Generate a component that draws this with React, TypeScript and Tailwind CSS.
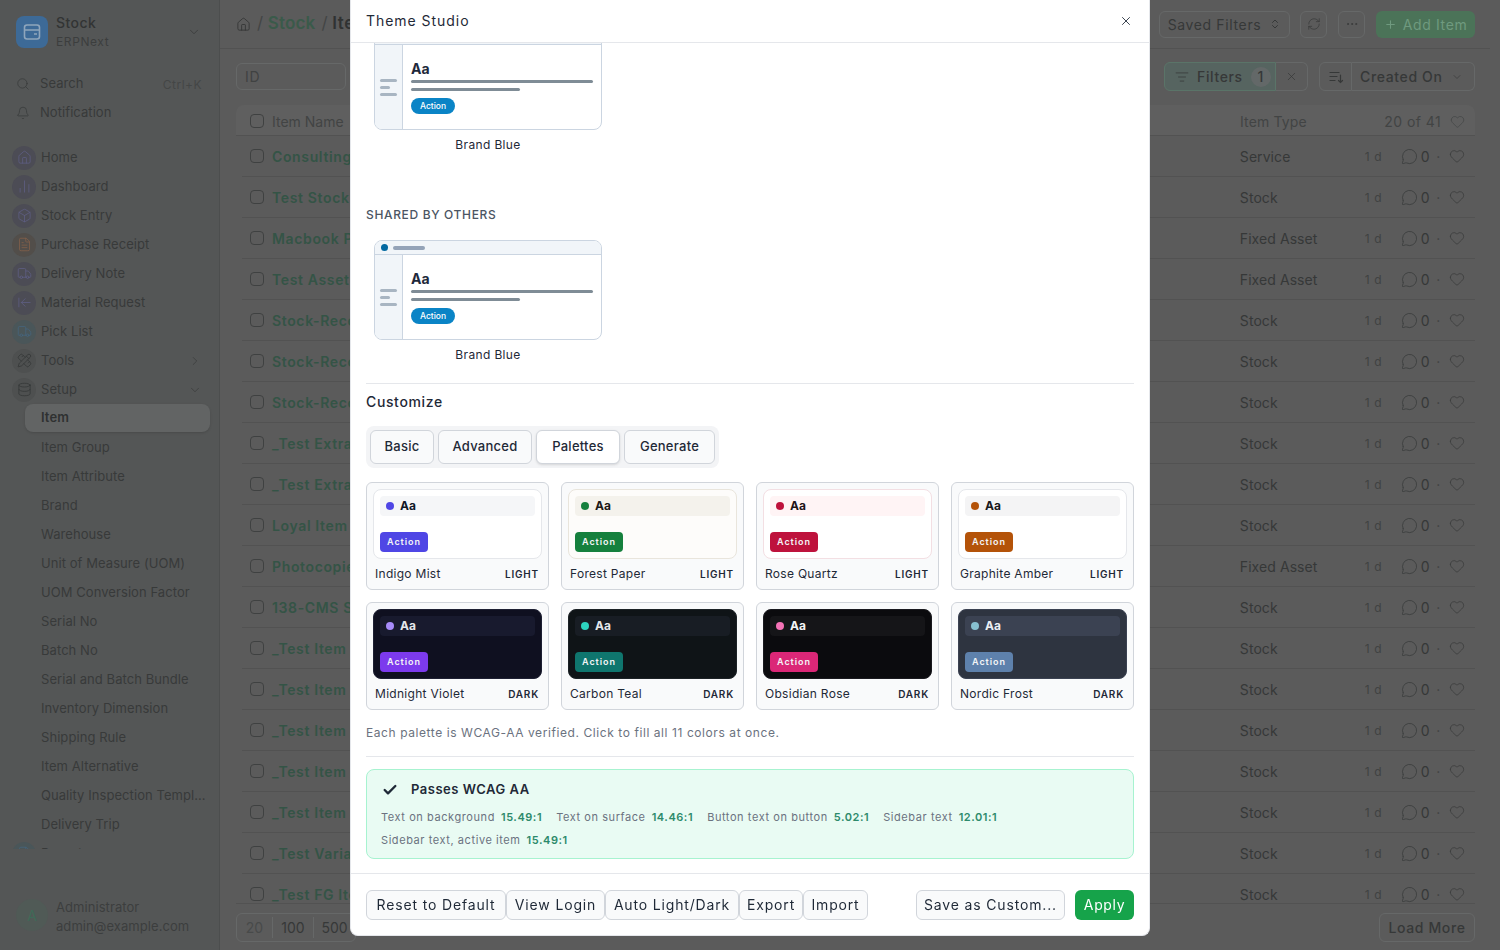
import {
  ArrowLeftToLine, Bell, Box, ChartNoAxesColumn, Check, ChevronDown, ChevronRight,
  ChevronsUpDown, Database, Ellipsis, FileText, Heart, Home, ListFilter, MessageCircle, PencilRuler,
  Plus, RefreshCw, Search, Truck, X,
} from "lucide-react";

const menu = [
  { label: "Home", icon: Home, bg: "bg-[#4c4c55]", fg: "text-[#5f5f85]" },
  { label: "Dashboard", icon: ChartNoAxesColumn, bg: "bg-[#4c4c55]", fg: "text-[#5f5f85]" },
  { label: "Stock Entry", icon: Box, bg: "bg-[#4c4c55]", fg: "text-[#5f5f85]" },
  { label: "Purchase Receipt", icon: FileText, bg: "bg-[#524e4a]", fg: "text-[#85604a]" },
  { label: "Delivery Note", icon: Truck, bg: "bg-[#4c4c55]", fg: "text-[#5f5f85]" },
  { label: "Material Request", icon: ArrowLeftToLine, bg: "bg-[#4c4c55]", fg: "text-[#5f5f85]" },
  { label: "Pick List", icon: Truck, bg: "bg-[#4a5659]", fg: "text-[#45667f]" },
  { label: "Tools", icon: PencilRuler, bg: "bg-[#4e5050]", fg: "text-[#333535]", arrow: "right" },
  { label: "Setup", icon: Database, bg: "bg-[#4e5050]", fg: "text-[#333535]", arrow: "down" },
];

const setupItems = [
  "Item Group", "Item Attribute", "Brand", "Warehouse", "Unit of Measure (UOM)", "UOM Conversion Factor",
  "Serial No", "Batch No", "Serial and Batch Bundle", "Inventory Dimension", "Shipping Rule",
  "Item Alternative", "Quality Inspection Template", "Delivery Trip",
];

const rows = [
  ["Consulting Services", "Service"], ["Test Stock Item", "Stock"], ["Macbook Pro 16", "Fixed Asset"],
  ["Test Asset Item", "Fixed Asset"], ["Stock-Reco-Item-1", "Stock"], ["Stock-Reco-Item-2", "Stock"],
  ["Stock-Reco-Item-3", "Stock"], ["_Test Extra Item 1", "Stock"], ["_Test Extra Item 2", "Stock"],
  ["Loyal Item", "Stock"], ["Photocopier Unit", "Fixed Asset"], ["138-CMS Shoe", "Stock"],
  ["_Test Item Group", "Stock"], ["_Test Item Home", "Stock"], ["_Test Item Desktop", "Stock"],
  ["_Test Item With", "Stock"], ["_Test Item Wise", "Stock"], ["_Test Variant Item", "Stock"],
  ["_Test FG Item", "Stock"],
];

const tabs = [
  { label: "Basic", w: "w-[64px]" },
  { label: "Advanced", w: "w-[94px]" },
  { label: "Palettes", w: "w-[84px]" },
  { label: "Generate", w: "w-[91px]" },
];

const footerLeft = [
  { label: "Reset to Default", w: "w-[140px]" },
  { label: "View Login", w: "w-[99px]" },
  { label: "Auto Light/Dark", w: "w-[134px]" },
  { label: "Export", w: "w-[64px]" },
  { label: "Import", w: "w-[65px]" },
];

const palettes = [
  { name: "Indigo Mist", mode: "LIGHT", card: "bg-white border-[#e5e7eb]", strip: "bg-[#f5f6f8]", dot: "bg-[#4f46e5]", aa: "text-[#111827]", btn: "bg-[#4f46e5]" },
  { name: "Forest Paper", mode: "LIGHT", card: "bg-[#fdfcfa] border-[#e9e5dc]", strip: "bg-[#f4f2ec]", dot: "bg-[#15803d]", aa: "text-[#1c1917]", btn: "bg-[#15803d]" },
  { name: "Rose Quartz", mode: "LIGHT", card: "bg-white border-[#f3dfe3]", strip: "bg-[#fff4f5]", dot: "bg-[#be123c]", aa: "text-[#1f1418]", btn: "bg-[#be123c]" },
  { name: "Graphite Amber", mode: "LIGHT", card: "bg-white border-[#e5e7eb]", strip: "bg-[#f4f4f5]", dot: "bg-[#b45309]", aa: "text-[#18181b]", btn: "bg-[#b45309]" },
  { name: "Midnight Violet", mode: "DARK", card: "bg-[#0f1020] border-[#1e2033]", strip: "bg-[#181a2e]", dot: "bg-[#a78bfa]", aa: "text-[#e5e7eb]", btn: "bg-[#7c3aed]" },
  { name: "Carbon Teal", mode: "DARK", card: "bg-[#0f1417] border-[#1c2226]", strip: "bg-[#181d24]", dot: "bg-[#2dd4bf]", aa: "text-[#e5e7eb]", btn: "bg-[#0f766e]" },
  { name: "Obsidian Rose", mode: "DARK", card: "bg-[#0b0b0e] border-[#1a1a1f]", strip: "bg-[#151518]", dot: "bg-[#f472b6]", aa: "text-[#f4f4f5]", btn: "bg-[#db2777]" },
  { name: "Nordic Frost", mode: "DARK", card: "bg-[#2e3440] border-[#3b4252]", strip: "bg-[#3b4252]", dot: "bg-[#88c0d0]", aa: "text-[#eceff4]", btn: "bg-[#5e81ac]" },
];

const metrics = [
  ["Text on background", "15.49:1"], ["Text on surface", "14.46:1"], ["Button text on button", "5.02:1"],
  ["Sidebar text", "12.01:1"], ["Sidebar text, active item", "15.49:1"],
];

function Sidebar() {
  return (
    <aside className="w-[220px] h-full shrink-0 flex flex-col border-r border-[#4c4e4e] bg-[#545656] text-[#383a3a] text-[13px] tracking-[0.005em]">
      <div className="h-[64px] shrink-0 flex items-center pl-4 pr-[18px]">
        <div className="w-8 h-8 rounded-lg bg-[#3d6a97] flex items-center justify-center">
          <svg width="18" height="18" viewBox="0 0 18 18" fill="none" stroke="#8fa6bc" strokeWidth="1.6">
            <rect x="1.5" y="2" width="15" height="14" rx="2.5" />
            <path d="M1.5 7h15M11 11h3" />
          </svg>
        </div>
        <div className="ml-2 flex-1 leading-[19px]">
          <div className="text-[14px] font-medium tracking-[0.03em] text-[#323434]">Stock</div>
          <div className="text-[12px] text-[#3c3e3e] tracking-[0.05em]">ERPNext</div>
        </div>
        <ChevronDown size={14} strokeWidth={1.3} className="text-[#363838]" />
      </div>
      <div className="mt-[5px] flex flex-col pl-4 pr-[17px]">
        <div className="h-[29px] flex items-center gap-[10px]">
          <Search size={14} strokeWidth={1.3} />
          <span className="flex-1">Search</span>
          <span className="text-[12px] text-[#444646] pt-[2px] tracking-[0.04em]">Ctrl+K</span>
        </div>
        <div className="h-[29px] flex items-center gap-[10px]">
          <Bell size={14} strokeWidth={1.3} />
          <span>Notification</span>
        </div>
      </div>
      <nav className="mt-[16px] h-[706px] shrink-0 overflow-hidden pl-3 pr-[17px]">
        {menu.map((m) => {
          const Icon = m.icon;
          return (
            <div key={m.label} className="h-[29px] flex items-center gap-[5px]">
              <span className={`w-6 h-6 rounded-full flex items-center justify-center ${m.bg}`}>
                <Icon size={15} strokeWidth={1.2} className={m.fg} />
              </span>
              <span className="flex-1">{m.label}</span>
              {m.arrow === "right" && <ChevronRight size={14} strokeWidth={1.2} />}
              {m.arrow === "down" && <ChevronDown size={14} strokeWidth={1.2} />}
            </div>
          );
        })}
        <div className="ml-[13px] mr-[-8px] h-[28px] mb-px rounded-lg bg-[#626464] shadow-sm flex items-center pl-[16px] font-semibold text-[#2f3131]">
          Item
        </div>
        {setupItems.map((s) => (
          <div key={s} className="h-[29px] flex items-center pl-[29px]">
            <span className="block w-[165px] shrink-0 truncate">{s}</span>
          </div>
        ))}
        <div className="h-[29px] flex items-center gap-[5px]">
          <span className="w-6 h-6 rounded-full bg-[#4a5659] flex items-center justify-center">
            <FileText size={15} strokeWidth={1.2} className="text-[#45667f]" />
          </span>
          <span>Reports</span>
        </div>
      </nav>
      <div className="flex-1 flex items-end pl-4 pb-[19px]">
        <div className="w-8 h-8 rounded-full bg-[#505a56] flex items-center justify-center text-[14px] text-[#3f6a58]">A</div>
        <div className="ml-2 mb-[-5px] text-[13px] leading-[19px] text-[#3c3e3e]">
          <div>Administrator</div>
          <div>admin@example.com</div>
        </div>
      </div>
    </aside>
  );
}

function TopBtn({ children, className = "" }: { children: React.ReactNode; className?: string }) {
  return (
    <div className={`h-[27px] rounded-md border border-[#666868] flex items-center justify-center text-[#363838] ${className}`}>
      {children}
    </div>
  );
}

function Main() {
  return (
    <main className="flex-1 min-w-0 h-full flex flex-col bg-[#5b5b5b] text-[14px] text-[#363838] pr-[10px]">
      <header className="h-[49px] shrink-0 border-b border-[#525252] flex items-center pl-4 pr-[15px]">
        <Home size={15} strokeWidth={1.4} className="text-[#333535]" />
        <span className="ml-[6px] text-[17px] text-[#434545]">/</span>
        <span className="ml-[4px] text-[17px] font-semibold tracking-[0.01em] text-[#3a5a4a]">Stock</span>
        <span className="ml-[6px] text-[17px] text-[#434545]">/</span>
        <span className="ml-[4px] text-[17px] font-semibold text-[#303232]">Item</span>
        <div className="flex-1" />
        <TopBtn className="w-[131px] gap-2">Saved Filters <ChevronsUpDown size={12} /></TopBtn>
        <TopBtn className="w-[27px] ml-[10px]"><RefreshCw size={14} strokeWidth={1.2} /></TopBtn>
        <TopBtn className="w-[27px] ml-[11px]"><Ellipsis size={14} strokeWidth={1.3} /></TopBtn>
        <div className="w-[99px] h-[27px] ml-[11px] rounded-md bg-[#4b7358] flex items-center justify-center gap-[6px] text-[#6f9a7f]">
          <Plus size={13} /> Add Item
        </div>
      </header>
      <div className="h-[56px] shrink-0 flex items-center pl-4 pr-[15px] pb-[1px]">
        <div className="w-[110px] h-[27px] rounded-md border border-[#666868] flex items-center pl-2 text-[#404242]">ID</div>
        <div className="flex-1" />
        <div className="w-[112px] h-[29px] rounded-l-md border border-[#5a7468] bg-[#566460] flex items-center pl-[10px] gap-2 font-medium">
          <ListFilter size={14} strokeWidth={1.3} /> Filters
          <span className="w-5 h-5 rounded-full bg-[#636868] flex items-center justify-center">1</span>
        </div>
        <div className="w-[32px] h-[29px] rounded-r-md border border-l-0 border-[#666868] flex items-center justify-center">
          <X size={13} strokeWidth={1.3} />
        </div>
        <div className="w-[33px] h-[29px] ml-[11px] rounded-l-md border border-[#666868] flex items-center justify-center">
          <svg width="16" height="16" viewBox="0 0 16 16" fill="none" stroke="currentColor" strokeWidth="1.2" strokeLinecap="round">
            <path d="M2 3.5h9M2 7.5h7M2 11.5h5M12.5 6v7.5M10.5 11.5l2 2 2-2" />
          </svg>
        </div>
        <div className="w-[123px] h-[29px] rounded-r-md border border-l-0 border-[#666868] flex items-center pl-2 gap-2 font-medium">
          Created On <ChevronDown size={12} strokeWidth={1.3} />
        </div>
      </div>
      <div className="mx-4 mr-[15px] h-[31px] shrink-0 rounded-t-lg bg-[#5f5f5f] flex items-center pl-[14px] pr-[10px] pt-[2px] border-b border-[#525252] text-[#424444] tracking-normal">
        <span className="w-[14px] h-[14px] rounded-[4px] border border-[#3f4141]" />
        <span className="ml-2">Item Name</span>
        <span className="ml-auto w-[144px] tracking-[0.01em]">Item Type</span>
        <span className="w-[57px] text-right tracking-[0.03em]">20 of 41</span>
        <Heart size={15} strokeWidth={1.1} className="ml-[9px]" />
      </div>
      <div className="ml-4 mr-[15px] h-[767px] shrink-0 overflow-hidden">
        {rows.map(([name, type]) => (
          <div key={name} className="ml-[6px] h-[41px] flex items-center pl-2 pr-[10px] border-b border-[#525252]">
            <span className="w-[14px] h-[14px] rounded-[4px] border border-[#3f4141]" />
            <span className="ml-2 font-semibold text-[#345446]">{name}</span>
            <span className="ml-auto w-[125px] tracking-[0.005em]">{type}</span>
            <span className="w-[36px] pt-[2px] text-[12px] text-[#404242]">1 d</span>
            <MessageCircle size={17} strokeWidth={1.05} />
            <span className="ml-[3px]">0</span>
            <span className="ml-[6px] text-[#404242]">·</span>
            <Heart size={16} strokeWidth={1.05} className="ml-[8px]" />
          </div>
        ))}
      </div>
      <div className="flex-1 border-t border-[#525252] mx-4 mr-[15px] flex items-center justify-between">
        <div className="h-[29px] rounded-md border border-[#666868] flex items-center tracking-normal">
          <span className="w-[36px] text-center text-[#484a4a] border-r border-[#666868]">20</span>
          <span className="w-[41px] text-center border-r border-[#666868]">100</span>
          <span className="w-[41px] text-center">500</span>
        </div>
        <div className="w-[96px] h-[29px] rounded-md border border-[#666868] flex items-center justify-center font-medium">Load More</div>
      </div>
    </main>
  );
}

function ThemeCard() {
  return (
    <div className="w-[228px] tracking-normal">
      <div className="h-[100px] rounded-lg border border-[#cbd5e1] overflow-hidden bg-white flex flex-col">
        <div className="h-[14px] shrink-0 bg-[#f1f5f9] border-b border-[#cbd5e1] flex items-center pl-[6px] gap-[5px]">
          <span className="w-[7px] h-[7px] rounded-full bg-[#0369a1]" />
          <span className="w-[32px] h-[4px] rounded-full bg-[#94a3b8]" />
        </div>
        <div className="flex-1 flex">
          <div className="w-[28px] shrink-0 bg-[#f1f5f9] border-r border-[#cbd5e1] flex flex-col justify-center gap-1 pl-[5px]">
            <span className="w-[17px] h-[3px] rounded-full bg-[#a8b5c2]" />
            <span className="w-[10px] h-[3px] rounded-full bg-[#a8b5c2]" />
            <span className="w-[17px] h-[3px] rounded-full bg-[#a8b5c2]" />
          </div>
          <div className="flex-1 px-2 pt-[15px]">
            <div className="text-[14px] leading-[18px] font-bold text-[#1e293b]">Aa</div>
            <div className="mt-[2px] h-[3px] rounded-full bg-[#7f8c96]" />
            <div className="mt-[5px] h-[3px] w-[109px] rounded-full bg-[#7f8c96]" />
            <div className="mt-[7px] w-[44px] h-4 rounded-full bg-[#0a84c6] flex items-center justify-center text-[8.5px] font-medium text-white">Action</div>
          </div>
        </div>
      </div>
      <div className="mt-[5px] h-5 leading-5 text-center text-[12px] tracking-[0.03em] text-[#1f2937]">Brand Blue</div>
    </div>
  );
}

function PaletteCard({ p }: { p: (typeof palettes)[number] }) {
  return (
    <div className="h-[108px] rounded-md border border-[#d1d5db] bg-[#f9fafb] p-[6px]">
      <div className={`h-[70px] rounded-lg border p-[6px] ${p.card}`}>
        <div className={`h-5 rounded pl-[6px] flex items-center gap-[6px] ${p.strip}`}>
          <span className={`w-2 h-2 rounded-full ${p.dot}`} />
          <span className={`text-[12px] font-bold tracking-normal ${p.aa}`}>Aa</span>
        </div>
        <div className={`mt-4 w-12 h-5 rounded flex items-center justify-center text-[9px] font-semibold text-[#f3f4f6] ${p.btn}`}>Action</div>
      </div>
      <div className="mt-[6px] pl-[2px] pr-[3px] flex items-center justify-between">
        <span className="text-[12px] tracking-[0.024em] text-[#1f2937]">{p.name}</span>
        <span className="text-[10px] font-semibold tracking-[0.08em] text-[#1f2937]">{p.mode}</span>
      </div>
    </div>
  );
}

function FooterBtn({ children, className = "" }: { children: React.ReactNode; className?: string }) {
  return (
    <button className={`h-[30px] rounded-md border border-[#d1d5db] bg-[#f9fafb] text-[14px] tracking-[0.06em] text-[#1f2937] ${className}`}>
      {children}
    </button>
  );
}

function ThemeModal() {
  return (
    <div className="absolute left-[350px] top-0 w-[800px] h-[936px] bg-white rounded-b-lg border-x border-b border-[#e5e7eb] flex flex-col font-[Inter,sans-serif] tracking-[0.06em]">
      <div className="h-[43px] shrink-0 border-b border-[#e5e7eb] pl-[15px] pr-[16px] pb-px flex items-center justify-between">
        <span className="text-[14px] text-[#1f2937]">Theme Studio</span>
        <X size={14} strokeWidth={1.5} className="text-[#1f2937]" />
      </div>
      <div className="flex-1 overflow-hidden px-[15px]">
        <div className="mt-[-13px] pl-2"><ThemeCard /></div>
        <div className="mt-[52px] h-4 leading-4 text-[12px] font-medium tracking-[0.055em] text-[#4b5563]">SHARED BY OTHERS</div>
        <div className="mt-[17px] pl-2"><ThemeCard /></div>
        <div className="mt-[18px] border-t border-[#e5e7eb]" />
        <div className="mt-2 h-5 leading-5 text-[14px] font-medium tracking-[0.045em] text-[#1f2937]">Customize</div>
        <div className="mt-[14px] w-fit h-[42px] rounded-lg bg-[#f3f4f6] p-1 flex gap-1">
          {tabs.map((t) => (
            <div
              key={t.label}
              className={`h-[34px] rounded-md border border-[#d1d5db] flex items-center justify-center text-[13px] font-medium tracking-[0.02em] text-[#1f2937] ${t.w} ${t.label === "Palettes" ? "bg-white shadow-sm" : "bg-[#f9fafb]"}`}
            >
              {t.label}
            </div>
          ))}
        </div>
        <div className="mt-[14px] grid grid-cols-4 gap-3">
          {palettes.map((p) => <PaletteCard key={p.name} p={p} />)}
        </div>
        <div className="mt-[15px] h-4 leading-4 text-[12px] tracking-[0.048em] text-[#6b7280]">
          Each palette is WCAG-AA verified. Click to fill all 11 colors at once.
        </div>
        <div className="mt-[15px] border-t border-[#e5e7eb]" />
        <div className="mt-3 h-[90px] rounded-lg border border-[#a7f3d0] bg-[#e9fbf3] px-[14px] pt-[10px]">
          <div className="flex items-center gap-[13px] pl-px h-[19px]">
            <Check size={16} strokeWidth={3.5} className="text-[#1f2937]" />
            <span className="text-[13px] font-semibold tracking-[0.04em] text-[#1f2937]">Passes WCAG AA</span>
          </div>
          <div className="mt-[10px] flex flex-wrap gap-x-[14px] gap-y-[7px] text-[11px] leading-4 tracking-[0.052em] text-[#6b7280]">
            {metrics.map(([label, value]) => (
              <span key={label} className="flex gap-[6px]">
                {label} <b className="font-semibold tracking-[0.05em] text-[#2d8a6b]">{value}</b>
              </span>
            ))}
          </div>
        </div>
      </div>
      <div className="h-[62px] shrink-0 border-t border-[#e5e7eb] px-[15px] flex items-center justify-between">
        <div className="flex">
          {footerLeft.map((b) => (
            <FooterBtn key={b.label} className={b.w}>{b.label}</FooterBtn>
          ))}
        </div>
        <div className="flex gap-[10px]">
          <FooterBtn className="w-[149px]">Save as Custom...</FooterBtn>
          <button className="h-[30px] w-[59px] rounded-md bg-[#16a34a] text-[14px] tracking-[0.045em] text-white">Apply</button>
        </div>
      </div>
    </div>
  );
}

export default function App() {
  return (
    <div className="relative w-full h-screen overflow-hidden flex font-[Inter,sans-serif] tracking-[0.04em]">
      <Sidebar />
      <Main />
      <div className="absolute inset-0 backdrop-blur-[0.5px]" />
      <ThemeModal />
    </div>
  );
}
